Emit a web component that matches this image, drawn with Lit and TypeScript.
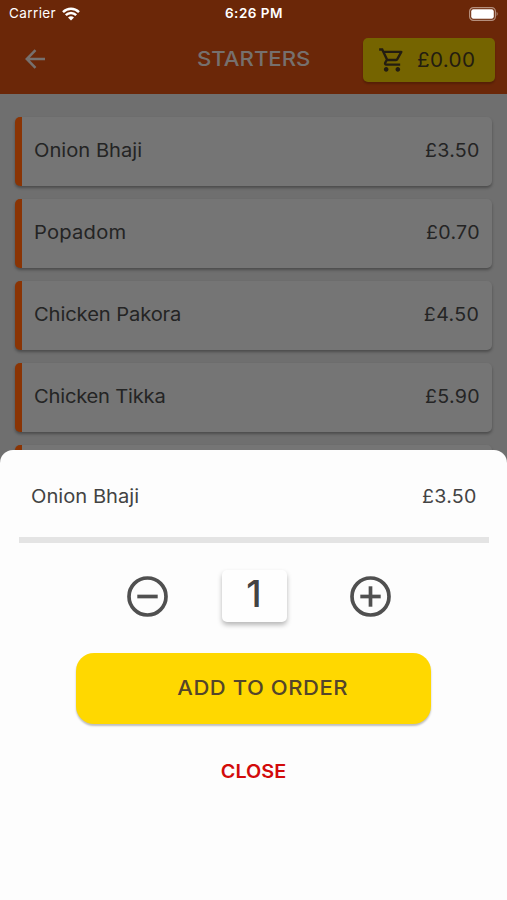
import { LitElement, html, css, svg } from "lit";
import { customElement } from "lit/decorators.js";

const ITEMS = [
  { name: "Onion Bhaji", price: "£3.50", cls: "" },
  { name: "Popadom", price: "£0.70", cls: "short" },
  { name: "Chicken Pakora", price: "£4.50", cls: "long" },
  { name: "Chicken Tikka", price: "£5.90", cls: "tight" },
  { name: "", price: "", cls: "" },
];

@customElement("app-root")
export class AppRoot extends LitElement {
  static styles = css`
    :host { display: block; position: relative; width: 507px; height: 900px; overflow: hidden;
      background: #cacaca; color: #434343; font-family: Inter, "Open Sans", sans-serif; font-weight: 500; }
    * { box-sizing: border-box; }
    svg { display: block; }
    span, button { white-space: nowrap; }
    button { border: 0; padding: 0; background: none; font: inherit; color: inherit; }
    .header { height: 94px; padding-top: 27px; background: #c3470f; }
    .bar { display: grid; grid-template-columns: 197px 1fr 132px; height: 64px; align-items: center; padding-right: 12px; }
    .back { padding: 0 0 0 25px; color: #d7cdc8; }
    .title { color: #d7cdc8; font-size: 20.5px; line-height: 24px; transform: scaleX(1.08); transform-origin: left; }
    .cart { height: 44px; margin-top: 1px; background: #d5b600; border-radius: 5px; display: flex; align-items: center;
      padding-left: 15px; gap: 11px; color: #40351f; font-size: 19.5px; box-shadow: 0 2px 2px rgba(0,0,0,.2); }
    .cart svg { margin-top: 1px; }
    .cart span { font-weight: 400; letter-spacing: .3px; transform: scaleX(1.06); transform-origin: left; }
    .list { padding: 23px 15px 0; display: flex; flex-direction: column; gap: 13px; }
    .card { height: 69px; flex: none; background: #d5d5d5; border-left: 7px solid #fb5f08; border-radius: 5px;
      box-shadow: 0 2px 3px rgba(0,0,0,.32); display: flex; justify-content: space-between; align-items: center;
      padding: 0 13px 3px 12px; }
    .name, .price { font-size: 18.5px; line-height: 24px; font-weight: 400; }
    .name { transform: scaleX(1.09); transform-origin: left; }
    .short { letter-spacing: .2px; }
    .long { letter-spacing: -.1px; }
    .tight { letter-spacing: -.2px; }
    .price { letter-spacing: .3px; margin-right: -.5px; transform: scaleX(1.06); transform-origin: right; }
    .scrim { position: absolute; inset: 0; background: rgba(0,0,0,.45); }
    .status { position: absolute; top: 0; left: 0; right: 0; height: 27px; padding: 0 8px 0 9px; display: grid;
      grid-template-columns: 1fr auto 1fr; align-items: center; color: #fff; font-size: 13.5px; font-weight: 600; line-height: 27px; }
    .clock { letter-spacing: .5px; }
    .carrier { display: flex; align-items: center; gap: 6px; font-weight: 400; }
    .carrier span { letter-spacing: .4px; }
    .battery { justify-self: end; }
    .sheet { position: absolute; left: 0; right: 0; bottom: 0; height: 450px; background: #fdfdfd;
      border-radius: 13px 13px 0 0; display: flex; flex-direction: column; align-items: center; }
    .row { align-self: stretch; height: 87px; padding: 5px 31px 0; display: flex; justify-content: space-between; align-items: center; }
    .rule { width: 470px; height: 6px; background: #e4e4e4; }
    .stepper { display: flex; margin: 26px 0 0 10px; height: 55px; width: 264px; justify-content: space-between; align-items: center; }
    .qty { width: 65px; height: 52px; margin: -2px 9px 0 0; border-radius: 5px; background: #fefefe; text-align: center;
      font-size: 37px; line-height: 48px; box-shadow: 0 3px 5px rgba(0,0,0,.28); }
    .add { width: 355px; height: 71px; margin-top: 29px; border-radius: 18px; background: #ffd800; color: #54452a;
      font-size: 20px; line-height: 68px; text-align: center; box-shadow: 0 2px 2px rgba(0,0,0,.25); padding: 0 0 1px 18px; }
    .add span { display: inline-block; letter-spacing: .5px; transform: scaleX(1.1); }
    .close { margin-top: 35px; color: #d20a0a; font-size: 18.5px; line-height: 24px; font-weight: 600; transform: scaleX(1.07); }
  `;

  private circle(plus: boolean) {
    return html`<svg width="41" height="41" viewBox="0 0 41 41" fill="none" stroke="#505050" stroke-width="3.7">
      <circle cx="20.5" cy="20.5" r="18.5" />
      <path d="M10.3 20.5h20.4" />
      ${plus ? svg`<path d="M20.5 10.3v20.4" />` : null}
    </svg>`;
  }

  render() {
    return html`
      <header class="header">
        <div class="bar">
          <div class="back">
            <svg width="21" height="20" viewBox="0 0 21 20" fill="none" stroke="currentColor" stroke-width="2.5"><path d="M20 10H2M10.5 1.2 1.8 10l8.7 8.8" /></svg>
          </div>
          <span class="title">STARTERS</span>
          <div class="cart">
            <svg width="28" height="28" viewBox="0 0 24 24" fill="currentColor"><path d="M15.55 13c.75 0 1.41-.41 1.75-1.03l3.58-6.49A.996.996 0 0 0 20.01 4H5.21l-.94-2H1v2h2l3.6 7.59-1.35 2.44C4.52 15.37 5.48 17 7 17h12v-2H7l1.1-2h7.45zM6.16 6h12.15l-2.76 5H8.53L6.16 6zM7 18c-1.1 0-1.99.9-1.99 2S5.9 22 7 22s2-.9 2-2-.9-2-2-2zm10 0c-1.1 0-1.99.9-1.99 2s.89 2 1.99 2 2-.9 2-2-.9-2-2-2z" /></svg>
            <span>£0.00</span>
          </div>
        </div>
      </header>
      <main class="list">
        ${ITEMS.map((i) => html`<div class="card"><span class="name ${i.cls}">${i.name}</span><span class="price">${i.price}</span></div>`)}
      </main>
      <div class="scrim"></div>
      <div class="status">
        <div class="carrier"><span>Carrier</span>
          <svg width="18" height="14" viewBox="0 0 18 14" fill="none" stroke="#fff" stroke-width="2.5">
            <path d="M1 5.1C5.6.6 12.4.6 17 5.1M3.8 8.2c3-2.9 7.4-2.9 10.4 0" />
            <path d="M9 13.6 6 10.6q3-2.6 6 0z" fill="#fff" stroke="none" />
          </svg>
        </div>
        <span class="clock">6:26 PM</span>
        <svg class="battery" width="30" height="14" viewBox="0 0 30 14">
          <rect x=".6" y=".6" width="25.8" height="12.8" rx="3.8" fill="none" stroke="#b58f7d" stroke-width="1.2" />
          <rect x="2.2" y="2.2" width="22.6" height="9.6" rx="2.2" fill="#fff" />
          <path d="M27.6 4.8q2.2 2.2 0 4.4z" fill="#b58f7d" />
        </svg>
      </div>
      <section class="sheet">
        <div class="row"><span class="name">Onion Bhaji</span><span class="price">£3.50</span></div>
        <div class="rule"></div>
        <div class="stepper">${this.circle(false)}<div class="qty">1</div>${this.circle(true)}</div>
        <button class="add"><span>ADD TO ORDER</span></button>
        <button class="close">CLOSE</button>
      </section>
    `;
  }
}
